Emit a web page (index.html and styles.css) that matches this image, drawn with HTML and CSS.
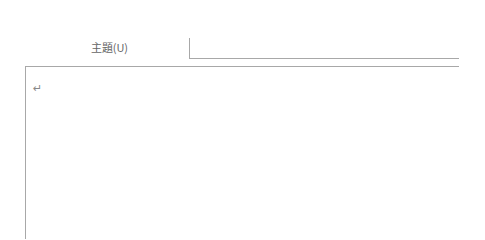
FILE: index.html
```html
<!DOCTYPE html>
<html>
<head>
<meta charset="utf-8">
<link rel="stylesheet" href="styles.css">
</head>
<body>
<div class="tabs">
  <div class="tab-label">主題(U)</div>
  <div class="tab-rest"></div>
</div>
<div class="doc">
  <div class="para">↵</div>
</div>
</body>
</html>
```
FILE: styles.css
```css
html, body {
  margin: 0;
  padding: 0;
  background: #fff;
  height: 100%;
  overflow: hidden;
}
body {
  font-family: "Noto Sans CJK TC", "Noto Sans", sans-serif;
}
.tabs {
  display: flex;
  margin-top: 38px;
  height: 21px;
}
.tab-label {
  width: 189px;
  box-sizing: border-box;
  padding-left: 91px;
  font-size: 11px;
  line-height: 16px;
  letter-spacing: -0.1px;
  color: #666;
  padding-top: 1px;
}
.tab-rest {
  width: 269px;
  border-left: 1px solid #a8a8a8;
  border-bottom: 1px solid #a8a8a8;
}
.doc {
  margin-top: 7px;
  margin-left: 25px;
  width: 433px;
  height: 172px;
  border-top: 1px solid #a8a8a8;
  border-left: 1px solid #a8a8a8;
}
.para {
  margin: 16px 0 0 7px;
  font-family: "DejaVu Sans", sans-serif;
  font-size: 11px;
  line-height: 12px;
  color: #888;
}
```
